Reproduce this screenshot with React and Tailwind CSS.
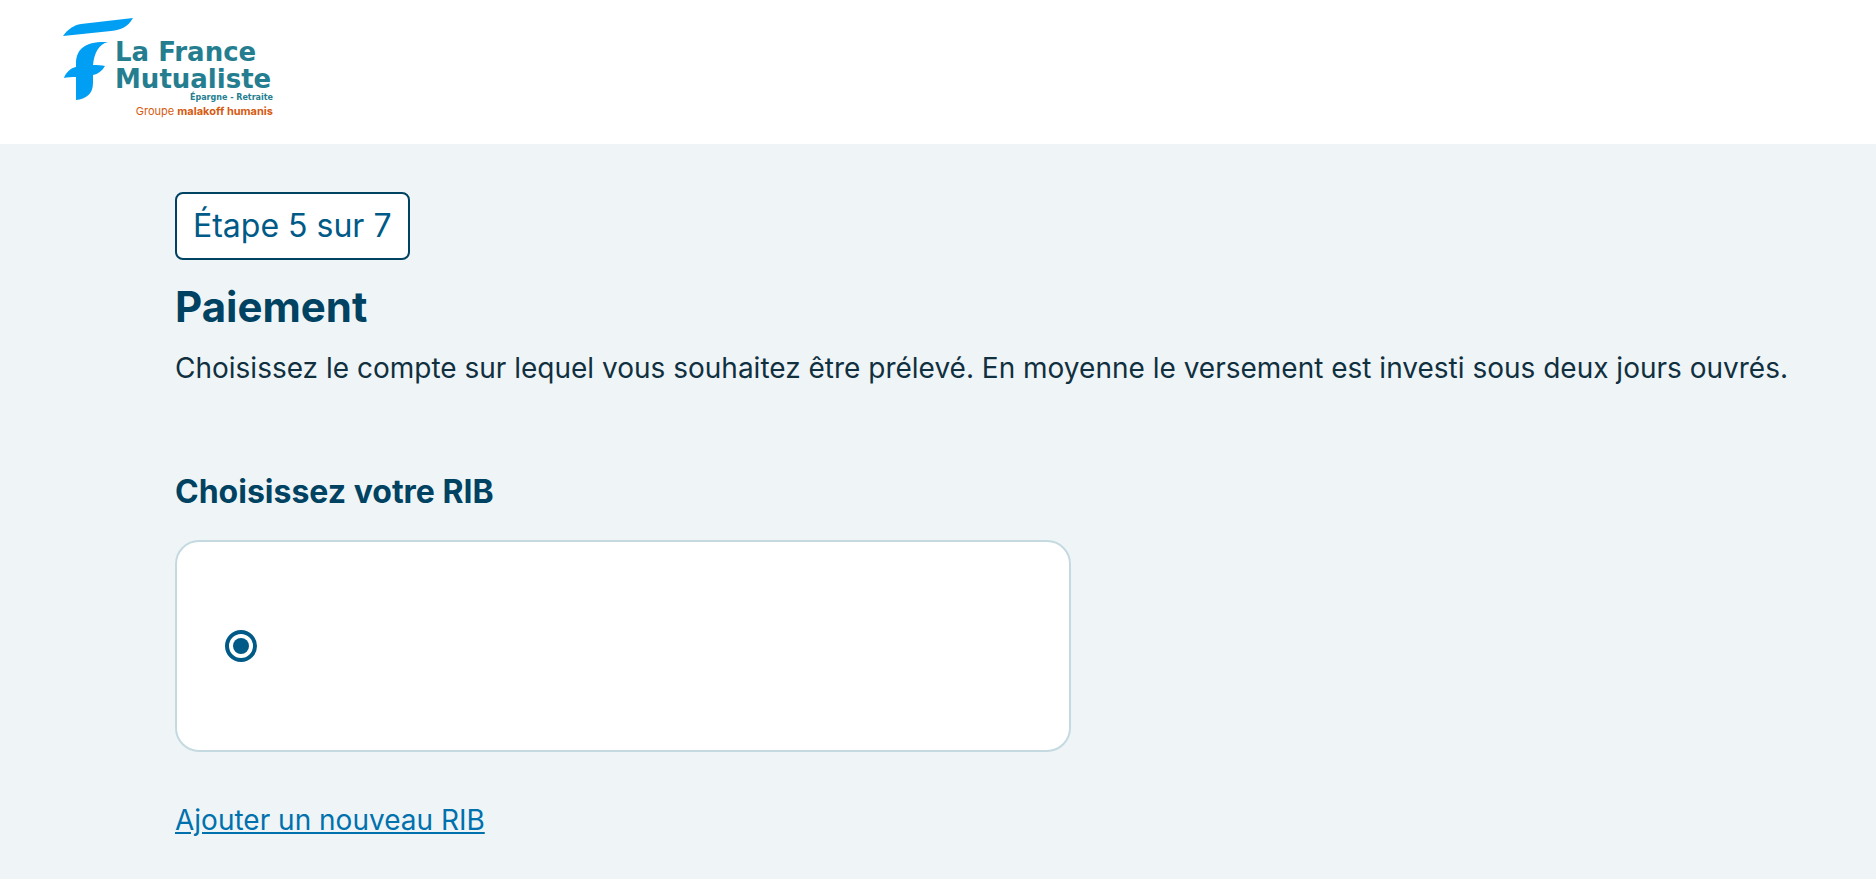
function Logo() {
  return (
    <svg className="block h-28 w-56" viewBox="0 0 224 112" role="img" aria-label="La France Mutualiste">
      <g fill="#009ff3">
        <path d="M0 20C5 13 11 9 18 8L70 2C65 11 58 14 48 15Z" />
        <path d="M45 26C36 28 31 37 30 49C34 49 39 49 42 50C39 55 35 58 30 59V67C30 78 23 83 13 84V61C9 61 4 61 1 62C3 56 8 52 13 51V46C14 32 23 25 45 26Z" />
      </g>
      <g fill="#247e90" className="font-['DejaVu_Sans',sans-serif] font-bold">
        <text x="52" y="45" fontSize="26">La France</text>
        <text x="52" y="72" fontSize="26">Mutualiste</text>
        <text x="210" y="84" fontSize="8" textAnchor="end">Épargne - Retraite</text>
      </g>
      <text x="210" y="99" fontSize="11" textAnchor="end" fill="#d65a0f" className="font-['Inter',sans-serif]">
        Groupe <tspan fontWeight="700">malakoff humanis</tspan>
      </text>
    </svg>
  );
}

export default function App() {
  return (
    <div lang="fr" className="min-h-screen bg-[#eff5f7] font-['Inter',sans-serif] text-[#11303f]">
      <header className="bg-white py-4 pl-[63px]">
        <a href="#" className="inline-block align-top">
          <Logo />
        </a>
      </header>
      <main className="pt-12 pr-16 pb-8 pl-[175px]">
        <p className="w-fit rounded-lg border-2 border-[#004262] bg-white px-4 py-3 text-[32px] leading-10 text-[#005a87]">
          Étape 5 sur 7
        </p>
        <h1 className="mt-5 text-[42px] leading-[54px] font-bold text-[#004262]">Paiement</h1>
        <p className="mt-3.5 text-[28px] leading-10">
          Choisissez le compte sur lequel vous souhaitez être prélevé. En moyenne le versement est investi sous deux
          jours ouvrés.
        </p>
        <form className="pt-20">
          <fieldset>
            <legend className="text-[32px] leading-12 font-bold text-[#004262]">Choisissez votre RIB</legend>
            <label className="mt-6 flex h-[212px] max-w-4xl items-center rounded-3xl border-2 border-[#c5d9e1] bg-white px-12">
              <input
                type="radio"
                name="rib"
                defaultChecked
                aria-label="RIB"
                className="grid size-8 appearance-none place-items-center rounded-full border-4 border-[#005a87] bg-white before:size-4 before:rounded-full before:bg-transparent checked:before:bg-[#005a87]"
              />
            </label>
          </fieldset>
        </form>
        <a href="#" className="mt-12 inline-block text-[28px] leading-10 text-[#0071ad] underline">
          Ajouter un nouveau RIB
        </a>
      </main>
    </div>
  );
}
